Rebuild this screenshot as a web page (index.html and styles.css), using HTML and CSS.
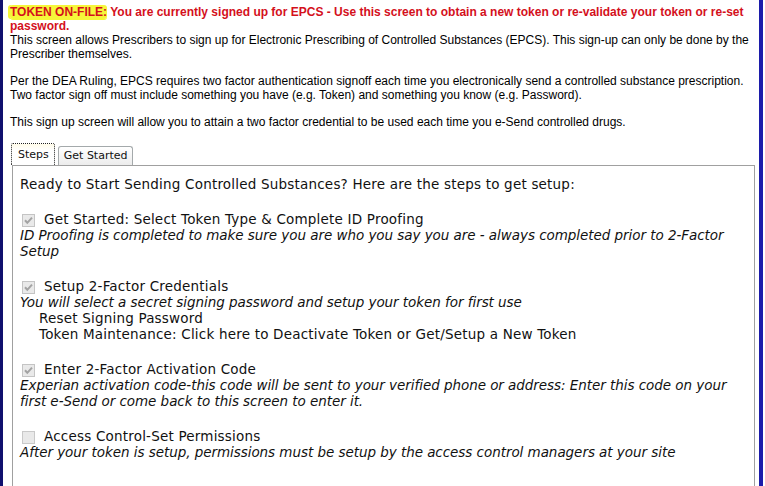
FILE: index.html
```html
<!DOCTYPE html>
<html>
<head>
<meta charset="utf-8">
<link rel="stylesheet" href="styles.css">
</head>
<body>
<div class="frame">
  <p class="notice"><span class="flag">TOKEN ON-FILE:</span><span class="msg"> You are currently signed up for EPCS - Use this screen to obtain a new token or re-validate your token or re-set password.</span></p>
  <p class="info">This screen allows Prescribers to sign up for Electronic Prescribing of Controlled Substances (EPCS). This sign-up can only be done by the Prescriber themselves.</p>
  <p class="info gap">Per the DEA Ruling, EPCS requires two factor authentication signoff each time you electronically send a controlled substance prescription. Two factor sign off must include something you have (e.g. Token) and something you know (e.g. Password).</p>
  <p class="info gap">This sign up screen will allow you to attain a two factor credential to be used each time you e-Send controlled drugs.</p>

  <div class="tabs">
    <div class="tab active">Steps</div>
    <div class="tab">Get Started</div>
  </div>
  <div class="panel">
    <div class="line">Ready to Start Sending Controlled Substances? Here are the steps to get setup:</div>

    <div class="step">
      <div class="title"><svg class="cb" viewBox="0 0 13 13" width="13" height="13"><rect x="0.5" y="0.5" width="12" height="12" fill="#e9e9e9" stroke="#c4c4c4"/><path d="M3 6.3 L5.3 8.8 L10 3.6" fill="none" stroke="#a3a3a3" stroke-width="2"/></svg>Get Started: Select Token Type &amp; Complete ID Proofing</div>
      <div class="desc">ID Proofing is completed to make sure you are who you say you are - always completed prior to 2-Factor Setup</div>
    </div>

    <div class="step">
      <div class="title"><svg class="cb" viewBox="0 0 13 13" width="13" height="13"><rect x="0.5" y="0.5" width="12" height="12" fill="#e9e9e9" stroke="#c4c4c4"/><path d="M3 6.3 L5.3 8.8 L10 3.6" fill="none" stroke="#a3a3a3" stroke-width="2"/></svg>Setup 2-Factor Credentials</div>
      <div class="desc">You will select a secret signing password and setup your token for first use</div>
      <div class="sub">Reset Signing Password</div>
      <div class="sub">Token Maintenance: Click here to Deactivate Token or Get/Setup a New Token</div>
    </div>

    <div class="step">
      <div class="title"><svg class="cb" viewBox="0 0 13 13" width="13" height="13"><rect x="0.5" y="0.5" width="12" height="12" fill="#e9e9e9" stroke="#c4c4c4"/><path d="M3 6.3 L5.3 8.8 L10 3.6" fill="none" stroke="#a3a3a3" stroke-width="2"/></svg>Enter 2-Factor Activation Code</div>
      <div class="desc">Experian activation code-this code will be sent to your verified phone or address: Enter this code on your first e-Send or come back to this screen to enter it.</div>
    </div>

    <div class="step">
      <div class="title"><svg class="cb" viewBox="0 0 13 13" width="13" height="13"><rect x="0.5" y="0.5" width="12" height="12" fill="#e9e9e9" stroke="#c9c9c9"/></svg>Access Control-Set Permissions</div>
      <div class="desc">After your token is setup, permissions must be setup by the access control managers at your site</div>
    </div>
  </div>
</div>
</body>
</html>
```

FILE: styles.css
```css
html, body {
  margin: 0;
  padding: 0;
  background: #ffffff;
  overflow: hidden;
}

.frame {
  box-sizing: border-box;
  width: 763px;
  height: 486px;
  overflow: hidden;
  border-left: 3px solid #10106e;
  border-right: 4px solid #1c1caa;
  padding: 5px 4px 0 7px;
  font-family: "Liberation Sans", Arial, sans-serif;
  font-size: 12px;
  line-height: normal;
  color: #000;
}

.notice {
  margin: 0;
  font-weight: bold;
  color: #d4101c;
}

.flag {
  background: #f6f63a;
  border-radius: 3px;
  box-shadow: -2px 0 0 #f6f63a, 0 1px 0 #f6f63a;
}

.info {
  margin: 0;
}

.info.gap {
  margin-top: 13px;
}

.tabs {
  display: flex;
  align-items: flex-end;
  gap: 3px;
  margin: 14px 0 0 1px;
  font-family: "DejaVu Sans", Verdana, sans-serif;
  font-size: 11px;
}

.tab {
  box-sizing: border-box;
  height: 19px;
  padding: 2px 4px 0 5px;
  border: 1px solid #a4a9ab;
  border-bottom: none;
  border-radius: 3px 3px 0 0;
  background: linear-gradient(#ffffff, #ececec);
  color: #111;
}

.tab.active {
  height: 22px;
  padding: 4px 5px 0 6px;
  border: 1px dotted #222;
  border-bottom: none;
  border-radius: 2px 2px 0 0;
  background: linear-gradient(#fffbe8, #ffffff 30%);
}

.panel {
  margin-left: 2px;
  border: 1px solid #a0a0a0;
  border-bottom: none;
  padding: 10px 7px 40px 7px;
  min-height: 300px;
  font-family: "DejaVu Sans", Verdana, sans-serif;
  font-size: 13.5px;
  letter-spacing: 0.2px;
  line-height: 16px;
  color: #111;
}

.step {
  margin-top: 16px;
}

.title {
  padding-top: 3px;
  display: flex;
  align-items: center;
}

.cb {
  flex: none;
  margin: 0 9px 0 2px;
  position: relative;
  top: 1px;
}

.desc {
  font-style: italic;
  letter-spacing: -0.05px;
}

.sub {
  padding-left: 19px;
}
```
